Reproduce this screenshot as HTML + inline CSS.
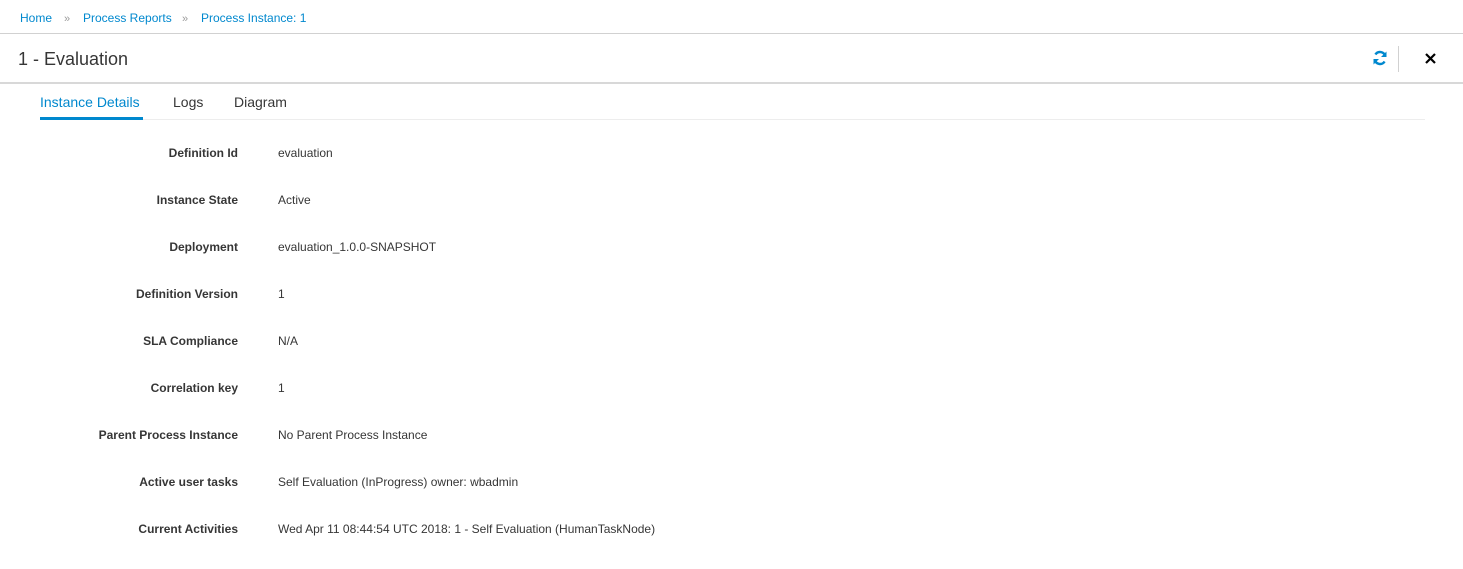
<!DOCTYPE html>
<html><head><meta charset="utf-8"><style>
body{margin:0;width:1463px;height:569px;background:#fff;font-family:"Liberation Sans",sans-serif;color:#363636;position:relative;overflow:hidden}
.a{position:absolute;white-space:nowrap}
.bc{top:11px;font-size:12px;color:#0088ce}
.sep{color:#9c9c9c;font-size:11px}
.line{position:absolute;left:0;width:1463px;height:1px;background:#d1d1d1}
.lbl{position:absolute;right:1225px;font-size:12px;font-weight:bold;color:#363636;white-space:nowrap}
.val{position:absolute;left:278px;font-size:12px;color:#363636;white-space:nowrap}
</style></head><body>
<div class="a bc" style="left:20px">Home</div>
<div class="a sep" style="left:64px;top:13px">»</div>
<div class="a bc" style="left:83px">Process Reports</div>
<div class="a sep" style="left:182px;top:13px">»</div>
<div class="a bc" style="left:201px">Process Instance: 1</div>
<div class="line" style="top:33px"></div>
<div class="a" style="left:18px;top:49px;font-size:18px;color:#363636">1 - Evaluation</div>
<svg class="a" style="left:1372px;top:50px" width="16" height="16" viewBox="0 0 16 16">
<path d="M13.2 6.2A5.4 5.4 0 0 0 3.4 4.5" fill="none" stroke="#0088ce" stroke-width="2.4"/>
<path d="M14.5 1.5v5.5H9z" fill="#0088ce"/>
<path d="M2.8 9.8A5.4 5.4 0 0 0 12.6 11.5" fill="none" stroke="#0088ce" stroke-width="2.4"/>
<path d="M1.5 14.5V9H7z" fill="#0088ce"/>
</svg>
<div class="a" style="left:1398px;top:46px;width:1px;height:26px;background:#d1d1d1"></div>
<svg class="a" style="left:1425px;top:53px" width="11" height="11" viewBox="0 0 11 11"><path d="M1 1L10 10M10 1L1 10" stroke="#000" stroke-width="2.2"/></svg>
<div class="line" style="top:82px;height:2px;background:#d8d8d8"></div>
<div class="a" style="left:40px;top:94px;font-size:14px;color:#0088ce">Instance Details</div>
<div class="a" style="left:173px;top:94px;font-size:14px;color:#363636">Logs</div>
<div class="a" style="left:234px;top:94px;font-size:14px;color:#363636">Diagram</div>
<div class="a" style="left:40px;top:119px;width:1385px;height:1px;background:#ededed"></div>
<div class="a" style="left:40px;top:117px;width:103px;height:3px;background:#0088ce"></div>
<div class="lbl" style="top:146px">Definition Id</div><div class="val" style="top:146px">evaluation</div>
<div class="lbl" style="top:193px">Instance State</div><div class="val" style="top:193px">Active</div>
<div class="lbl" style="top:240px">Deployment</div><div class="val" style="top:240px">evaluation_1.0.0-SNAPSHOT</div>
<div class="lbl" style="top:287px">Definition Version</div><div class="val" style="top:287px">1</div>
<div class="lbl" style="top:334px">SLA Compliance</div><div class="val" style="top:334px">N/A</div>
<div class="lbl" style="top:381px">Correlation key</div><div class="val" style="top:381px">1</div>
<div class="lbl" style="top:428px">Parent Process Instance</div><div class="val" style="top:428px">No Parent Process Instance</div>
<div class="lbl" style="top:475px">Active user tasks</div><div class="val" style="top:475px">Self Evaluation (InProgress) owner: wbadmin</div>
<div class="lbl" style="top:522px">Current Activities</div><div class="val" style="top:522px">Wed Apr 11 08:44:54 UTC 2018: 1 - Self Evaluation (HumanTaskNode)</div>
</body></html>
